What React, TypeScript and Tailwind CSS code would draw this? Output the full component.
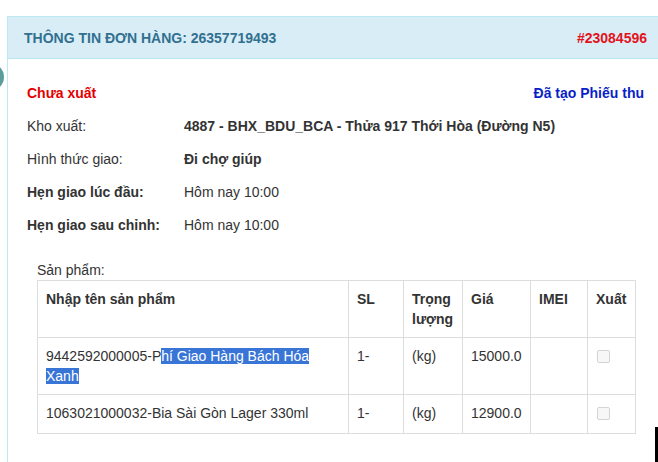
import React from 'react';

const infoRows = [
  { label: 'Kho xuất:', value: '4887 - BHX_BDU_BCA - Thửa 917 Thới Hòa (Đường N5)', labelBold: false, valueBold: true },
  { label: 'Hình thức giao:', value: 'Đi chợ giúp', labelBold: false, valueBold: true },
  { label: 'Hẹn giao lúc đầu:', value: 'Hôm nay 10:00', labelBold: true, valueBold: false },
  { label: 'Hẹn giao sau chỉnh:', value: 'Hôm nay 10:00', labelBold: true, valueBold: false },
];

const Checkbox = () => (
  <span className="inline-block w-[13px] h-[13px] border border-[#d4d4d4] rounded-[2px] bg-[#f7f7f7] mt-[4px]" />
);

const App = () => {
  return (
    <div
      className="relative w-[658px] h-[462px] overflow-hidden bg-white text-[14px] leading-[20px] text-[#333]"
      style={{ fontFamily: '"Liberation Sans", Arial, sans-serif' }}
    >
      {/* bit of a widget peeking from the left */}
      <div className="absolute left-[-24px] top-[63px] w-[28px] h-[28px] rounded-full bg-[#5b9d9d]" />

      <div className="ml-[7px] mt-[16px] w-[657px] h-[460px] border border-[#bce8f1] bg-white">
        <div className="h-[42px] px-4 flex items-center justify-between bg-[#d9edf7] border-b border-[#bce8f1] font-bold text-[14px]">
          <span className="text-[#31708f]">THÔNG TIN ĐƠN HÀNG: 26357719493</span>
          <span className="text-[#e3131b]">#23084596</span>
        </div>

        <div className="pt-[17px] pl-[19px] pr-[19px]">
          <div className="h-[33px] flex items-center justify-between font-bold">
            <span className="text-[#e50000]">Chưa xuất</span>
            <span className="text-[#0a1fc8]">Đã tạo Phiếu thu</span>
          </div>

          {infoRows.map((row) => (
            <div key={row.label} className="h-[33px] flex items-center">
              <span className={`w-[157px] ${row.labelBold ? 'font-bold' : ''}`}>{row.label}</span>
              <span className={row.valueBold ? 'font-bold' : ''}>{row.value}</span>
            </div>
          ))}

          <div className="mt-[19px] pl-[10px]">
            <div className="h-[20px]">Sản phẩm:</div>
            <table className="w-[598px] border-collapse border border-[#ddd] table-fixed">
              <colgroup>
                <col className="w-[311px]" />
                <col className="w-[55px]" />
                <col className="w-[59px]" />
                <col className="w-[68px]" />
                <col className="w-[57px]" />
                <col className="w-[48px]" />
              </colgroup>
              <thead>
                <tr className="align-top font-bold">
                  <th className="border border-[#ddd] p-2 text-left h-[57px]">Nhập tên sản phẩm</th>
                  <th className="border border-[#ddd] p-2 text-left">SL</th>
                  <th className="border border-[#ddd] p-2 text-left">Trọng lượng</th>
                  <th className="border border-[#ddd] p-2 text-left">Giá</th>
                  <th className="border border-[#ddd] p-2 text-left">IMEI</th>
                  <th className="border border-[#ddd] p-2 text-left">Xuất</th>
                </tr>
              </thead>
              <tbody>
                <tr className="align-top">
                  <td className="border border-[#ddd] p-2 h-[57px]">
                    9442592000005-P
                    <span className="bg-[#3875d7] text-white">hí Giao Hàng Bách Hóa Xanh</span>
                  </td>
                  <td className="border border-[#ddd] p-2">1-</td>
                  <td className="border border-[#ddd] p-2">(kg)</td>
                  <td className="border border-[#ddd] p-2">15000.0</td>
                  <td className="border border-[#ddd] p-2"></td>
                  <td className="border border-[#ddd] p-2 pl-[9px]"><Checkbox /></td>
                </tr>
                <tr className="align-top">
                  <td className="border border-[#ddd] p-2">1063021000032-Bia Sài Gòn Lager 330ml</td>
                  <td className="border border-[#ddd] p-2">1-</td>
                  <td className="border border-[#ddd] p-2">(kg)</td>
                  <td className="border border-[#ddd] p-2">12900.0</td>
                  <td className="border border-[#ddd] p-2"></td>
                  <td className="border border-[#ddd] p-2 pl-[9px]"><Checkbox /></td>
                </tr>
              </tbody>
            </table>
          </div>
        </div>
      </div>

      {/* dark edge at bottom right */}
      <div className="absolute right-0 top-[427px] w-[3px] h-[35px] bg-black" />
    </div>
  );
};

export default App;
